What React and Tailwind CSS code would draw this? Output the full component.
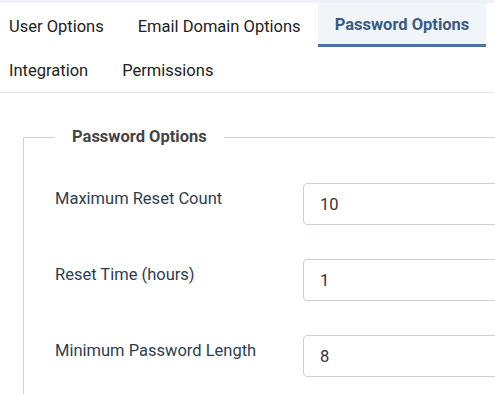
import React from 'react';

const tabsRow1 = [
  { label: 'User Options' },
  { label: 'Email Domain Options' },
  { label: 'Password Options', active: true },
];

const tabsRow2 = [{ label: 'Integration' }, { label: 'Permissions' }];

const fields = [
  { label: 'Maximum Reset Count', value: '10' },
  { label: 'Reset Time (hours)', value: '1' },
  { label: 'Minimum Password Length', value: '8' },
];

function Tab({ label, active }) {
  return (
    <div
      className={
        active
          ? 'h-full px-[17px] pt-[4px] flex items-center bg-[#f1f4f8] border-b-[3px] border-[#4d72a8] text-[#3a5a86] font-bold'
          : 'h-full px-[17px] pt-[4px] flex items-center text-[#222]'
      }
    >
      {label}
    </div>
  );
}

export default function App() {
  return (
    <div className="w-[495px] h-[394px] overflow-hidden bg-white font-['Roboto',sans-serif] text-[16.5px]">
      {/* Tab strip */}
      <div className="border-t-[3px] border-[#eef1f5] border-b border-b-[#e2e6eb]">
        <div className="ml-[-8px] flex flex-col">
          <div className="flex h-[44px]">
            {tabsRow1.map((t) => (
              <Tab key={t.label} {...t} />
            ))}
          </div>
          <div className="flex h-[45px]">
            {tabsRow2.map((t) => (
              <Tab key={t.label} {...t} />
            ))}
          </div>
        </div>
      </div>

      {/* Password options fieldset */}
      <div className="pl-[23px] pt-[32px]">
        <fieldset className="w-[600px] border border-[#cdd4dd] pl-[31px] pb-[20px]">
          <legend className="px-[17px] font-bold text-[#444] leading-[24px]">Password Options</legend>
          <div className="flex flex-col gap-[34px] pt-[34px]">
            {fields.map((f) => (
              <div key={f.label} className="flex items-start">
                <div className="w-[248px] pt-[4px] leading-[24px] text-[#2c3e50]">{f.label}</div>
                <input
                  readOnly
                  value={f.value}
                  className="flex-1 h-[42px] border border-[#cbd2da] rounded-[4px] px-[16px] text-[#333] outline-none"
                />
              </div>
            ))}
          </div>
        </fieldset>
      </div>
    </div>
  );
}
